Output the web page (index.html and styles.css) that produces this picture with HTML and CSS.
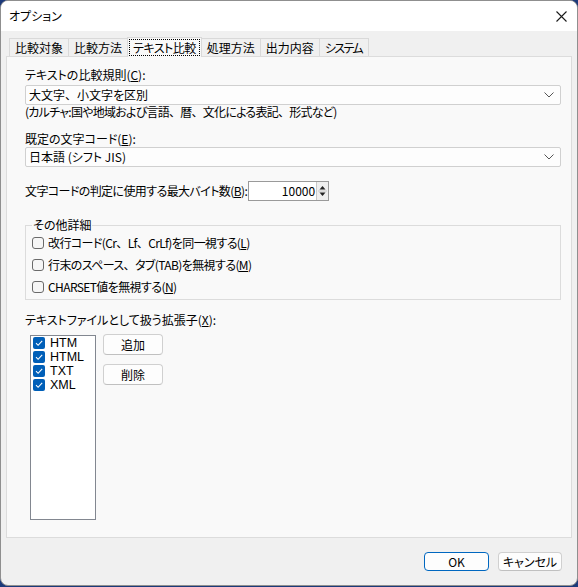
FILE: index.html
```html
<!DOCTYPE html>
<html lang="ja">
<head>
<meta charset="utf-8">
<title>オプション</title>
<link rel="stylesheet" href="styles.css">
</head>
<body>
<div class="window">
  <div class="titlebar">
    <span class="title">オプション</span>
    <svg class="close" width="11" height="11" viewBox="0 0 11 11"><path d="M0.5 0.5L10.5 10.5M10.5 0.5L0.5 10.5" stroke="#1a1a1a" stroke-width="1.1" fill="none"/></svg>
  </div>
  <div class="tabs">
    <div class="tab">比較対象</div>
    <div class="tab">比較方法</div>
    <div class="tab active"><span class="focus">テキスト比較</span></div>
    <div class="tab">処理方法</div>
    <div class="tab">出力内容</div>
    <div class="tab kana">システム</div>
  </div>
  <div class="panel">
    <div class="label first">テキストの比較規則(<u>C</u>):</div>
    <div class="combo">
      <span>大文字<span class="fw">、</span>小文字を区別</span>
      <svg class="chev" width="10" height="6" viewBox="0 0 10 6"><path d="M0.5 0.5L5 5L9.5 0.5" stroke="#555" stroke-width="1" fill="none"/></svg>
    </div>
    <div class="caption">(カルチャ:国や地域および言語<span class="fw">、</span>暦<span class="fw">、</span>文化による表記<span class="fw">、</span>形式など)</div>
    <div class="label second">既定の文字コード(<u>E</u>):</div>
    <div class="combo second">
      <span>日本語 (シフト JIS)</span>
      <svg class="chev" width="10" height="6" viewBox="0 0 10 6"><path d="M0.5 0.5L5 5L9.5 0.5" stroke="#555" stroke-width="1" fill="none"/></svg>
    </div>
    <div class="spinrow">
      <span class="tight">文字コードの判定に使用する最大バイト数(<u>B</u>):</span>
      <div class="spin">
        <span class="spinval">10000</span>
        <div class="spinbtns">
          <svg width="11" height="18" viewBox="0 0 11 18"><path d="M5.5 4L8.5 7.5H2.5Z" fill="#222"/><path d="M1 9H10" stroke="#c8c8c8"/><path d="M5.5 14L8.5 10.5H2.5Z" fill="#222"/></svg>
        </div>
      </div>
    </div>
    <fieldset class="group">
      <legend>その他詳細</legend>
      <div class="check"><span class="box"></span><span class="tight">改行コード(Cr<span class="fw">、</span>Lf<span class="fw">、</span>CrLf)を同一視する(<u>L</u>)</span></div>
      <div class="check"><span class="box"></span><span class="tight">行末のスペース<span class="fw">、</span>タブ(TAB)を無視する(<u>M</u>)</span></div>
      <div class="check"><span class="box"></span><span class="tight">CHARSET値を無視する(<u>N</u>)</span></div>
    </fieldset>
    <div class="label third">テキストファイルとして扱う拡張子(<u>X</u>):</div>
    <div class="extrow">
      <div class="list">
        <div class="item"><span class="cb"><svg width="12" height="12" viewBox="0 0 12 12"><path d="M3 6.2L5.1 8.3L9.2 3.8" stroke="#fff" stroke-width="1.1" fill="none"/></svg></span>HTM</div>
        <div class="item"><span class="cb"><svg width="12" height="12" viewBox="0 0 12 12"><path d="M3 6.2L5.1 8.3L9.2 3.8" stroke="#fff" stroke-width="1.1" fill="none"/></svg></span>HTML</div>
        <div class="item"><span class="cb"><svg width="12" height="12" viewBox="0 0 12 12"><path d="M3 6.2L5.1 8.3L9.2 3.8" stroke="#fff" stroke-width="1.1" fill="none"/></svg></span>TXT</div>
        <div class="item"><span class="cb"><svg width="12" height="12" viewBox="0 0 12 12"><path d="M3 6.2L5.1 8.3L9.2 3.8" stroke="#fff" stroke-width="1.1" fill="none"/></svg></span>XML</div>
      </div>
      <div class="sidebtns">
        <div class="btn side">追加</div>
        <div class="btn side">削除</div>
      </div>
    </div>
  </div>
  <div class="footer">
    <div class="btn ok">OK</div>
    <div class="btn cancel">キャンセル</div>
  </div>
</div>
</body>
</html>
```
FILE: styles.css
```css
* { box-sizing: border-box; }
html, body { margin: 0; padding: 0; }
body {
  width: 578px;
  height: 587px;
  background: #1c3a7a;
  font-family: "Noto Sans CJK JP", "Noto Sans", sans-serif;
  font-size: 12px;
  font-feature-settings: "palt";
  color: #000;
  overflow: hidden;
}
u { text-decoration: underline; text-underline-offset: 1px; }
.fw { font-feature-settings: normal; }
.tight { letter-spacing: -0.6px; }
.window {
  width: 578px;
  height: 586px;
  background: #f0f0f0;
  border: 1px solid #8f8f8f;
  border-radius: 8px;
  overflow: hidden;
}
.titlebar {
  height: 30px;
  background: #fff;
  display: flex;
  align-items: center;
  justify-content: space-between;
  padding: 0 10px 0 8px;
}
.title { line-height: 16px; }
.close { display: block; }
.tabs {
  margin-top: 6px;
  height: 19px;
  display: flex;
  align-items: flex-end;
  padding-left: 8px;
}
.tab {
  height: 18px;
  line-height: 17px;
  padding: 0 5px;
  border: 1px solid #d9d9d9;
  border-bottom: none;
  background: #f0f0f0;
  margin-left: -1px;
  white-space: nowrap;
}
.tab:first-child { margin-left: 0; }
.tab.kana { letter-spacing: -1.6px; padding: 0 6px 0 5px; }
.tab.active {
  height: 20px;
  margin-bottom: -1px;
  background: #f9f9f9;
  position: relative;
  z-index: 1;
  padding: 1px 1px 0;
  line-height: 17px;
}
.focus {
  display: block;
  border: 1px dotted #000;
  padding: 0 3px;
  line-height: 15px;
  letter-spacing: -0.5px;
}
.panel {
  margin: 0 5px;
  height: 482px;
  background: #f9f9f9;
  border: 1px solid #dcdcdc;
  padding: 10px 10px 0 18px;
}
.label { line-height: 16px; white-space: nowrap; }
.label.second { margin-top: 12px; }
.label.third { margin-top: 12px; }
.combo {
  margin-top: 2px;
  height: 20px;
  background: #fdfdfd;
  border: 1px solid #d0d0d0;
  border-radius: 2px;
  display: flex;
  align-items: center;
  justify-content: space-between;
  padding: 0 6px 0 3px;
  line-height: 16px;
}
.combo.second { margin-top: 0; }
.chev { display: block; }
.caption { line-height: 14px; white-space: nowrap; letter-spacing: -0.75px; }
.spinrow {
  margin-top: 14px;
  display: flex;
  align-items: center;
  white-space: nowrap;
  line-height: 16px;
}
.spin {
  margin-left: 1px;
  width: 81px;
  height: 20px;
  background: #fff;
  border: 1px solid #9a9a9a;
  display: flex;
  align-items: stretch;
}
.spinval {
  flex: 1;
  text-align: right;
  padding-right: 1px;
  line-height: 18px;
}
.spinbtns {
  width: 12px;
  background: #efefef;
  border-left: 1px solid #c8c8c8;
  display: flex;
}
.spinbtns svg { display: block; }
.group {
  margin: 17px 0 0 0;
  padding: 0 6px 1px;
  border: 1px solid #dcdcdc;
  min-width: 0;
}
.group legend {
  padding: 0 1px;
  margin-left: 0;
  line-height: 14px;
}
.check {
  height: 22px;
  display: flex;
  align-items: center;
  gap: 4px;
  white-space: nowrap;
  line-height: 16px;
}
.box {
  width: 12px;
  height: 12px;
  border: 1px solid #6a6a6a;
  border-radius: 3px;
  background: #f6f6f6;
  flex: none;
}
.extrow {
  margin-top: 7px;
  display: flex;
  align-items: flex-start;
  padding-left: 5px;
}
.list {
  width: 66px;
  height: 185px;
  background: #fff;
  border: 1px solid #828790;
  padding: 0 0 0 2px;
}
.item {
  height: 14px;
  display: flex;
  align-items: center;
  gap: 5px;
  line-height: 14px;
  font-family: "Liberation Sans", "Noto Sans", sans-serif;
  font-size: 12.5px;
}
.cb {
  width: 12px;
  height: 12px;
  border-radius: 2px;
  background: #005fb8;
  flex: none;
}
.cb svg { display: block; }
.sidebtns {
  margin-left: 7px;
  display: flex;
  flex-direction: column;
  gap: 9px;
  margin-top: -1px;
}
.btn {
  background: #fdfdfd;
  border: 1px solid #d0d0d0;
  border-bottom-color: #c0c0c0;
  border-radius: 4px;
  display: flex;
  align-items: center;
  justify-content: center;
  line-height: 16px;
}
.side { width: 60px; height: 21px; }
.footer {
  display: flex;
  justify-content: flex-end;
  gap: 9px;
  padding: 14px 15px 0 0;
}
.ok { width: 65px; height: 19px; border: 1px solid #0067c0; }
.cancel { width: 64px; height: 19px; }
```
